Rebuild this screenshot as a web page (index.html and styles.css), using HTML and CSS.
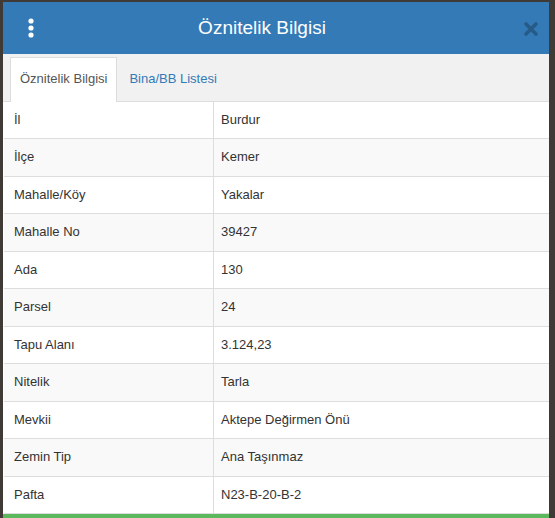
FILE: index.html
```html
<!DOCTYPE html>
<html>
  <head>
    <meta http-equiv="Content-Type" content="text/html; charset=UTF-8" />
    <title>Öznitelik Bilgisi</title>
    <link rel="stylesheet" href="styles.css">
  </head>
  <body>
    <div class="dialog">
      <div class="dialog-header">
        <span class="menu-btn">
          <svg width="8" height="20" viewBox="0 0 8 20">
            <circle cx="4" cy="3" r="2.6" fill="#fff" />
            <circle cx="4" cy="10" r="2.6" fill="#fff" />
            <circle cx="4" cy="17" r="2.6" fill="#fff" />
          </svg>
        </span>
        <h4 class="dialog-title">Öznitelik Bilgisi</h4>
        <span class="close-btn">
          <svg width="16" height="16" viewBox="0 0 16 16">
            <path d="M3 3 L13 13 M13 3 L3 13" stroke="#000" stroke-width="3.6" stroke-linecap="round" />
          </svg>
        </span>
      </div>

      <ul class="tabs">
        <li class="tab active">Öznitelik Bilgisi</li>
        <li class="tab">Bina/BB Listesi</li>
      </ul>

      <table class="attr-table">
        <tr><td>İl</td><td>Burdur</td></tr>
        <tr><td>İlçe</td><td>Kemer</td></tr>
        <tr><td>Mahalle/Köy</td><td>Yakalar</td></tr>
        <tr><td>Mahalle No</td><td>39427</td></tr>
        <tr><td>Ada</td><td>130</td></tr>
        <tr><td>Parsel</td><td>24</td></tr>
        <tr><td>Tapu Alanı</td><td>3.124,23</td></tr>
        <tr><td>Nitelik</td><td>Tarla</td></tr>
        <tr><td>Mevkii</td><td>Aktepe Değirmen Önü</td></tr>
        <tr><td>Zemin Tip</td><td>Ana Taşınmaz</td></tr>
        <tr><td>Pafta</td><td>N23-B-20-B-2</td></tr>
      </table>
      <div class="dialog-footer"></div>
    </div>
  </body>
</html>
```

FILE: styles.css
```css
body {
  margin: 0;
  background-color: #3f3a35;
  font-family: "Liberation Sans", Arial, sans-serif;
  font-size: 13px;
  color: #333;
}
.dialog {
  width: 546px;
  margin: 2px 0 0 3px;
  background-color: #fff;
  height: 516px;
  overflow: hidden;
}
.dialog-header {
  height: 52px;
  background-color: #337ab7;
  display: flex;
  align-items: center;
  padding: 0 10px 0 24px;
}
.menu-btn {
  display: flex;
  width: 8px;
}
.dialog-title {
  flex: 1;
  margin: 0;
  padding-right: 34px;
  text-align: center;
  color: #fff;
  font-size: 19px;
  font-weight: normal;
}
.close-btn {
  display: flex;
  opacity: 0.25;
  margin-top: 2px;
}
.tabs {
  list-style: none;
  margin: 0;
  padding: 3px 0 0 7px;
  background-color: #f1f1f1;
  border-bottom: 1px solid #ddd;
  display: flex;
  height: 44px;
}
.tab {
  padding: 12px 12px 0 12px;
  color: #337ab7;
  line-height: 20px;
}
.tab.active {
  background-color: #fff;
  color: #555;
  border: 1px solid #ddd;
  border-bottom: none;
  padding: 11px 9px 0 9px;
  margin-bottom: -1px;
}
.attr-table {
  width: 100%;
  border-collapse: collapse;
  margin-left: 1px;
}
.attr-table td {
  padding: 8px 7px;
  line-height: 20.45px;
  border-bottom: 1px solid #ddd;
}
.attr-table td:first-child {
  width: 192px;
  padding-left: 10px;
  border-right: 1px solid #ddd;
}
.attr-table tr:nth-child(even) {
  background-color: #f9f9f9;
}
.dialog-footer {
  height: 6px;
  background-color: #5cb85c;
}
```
